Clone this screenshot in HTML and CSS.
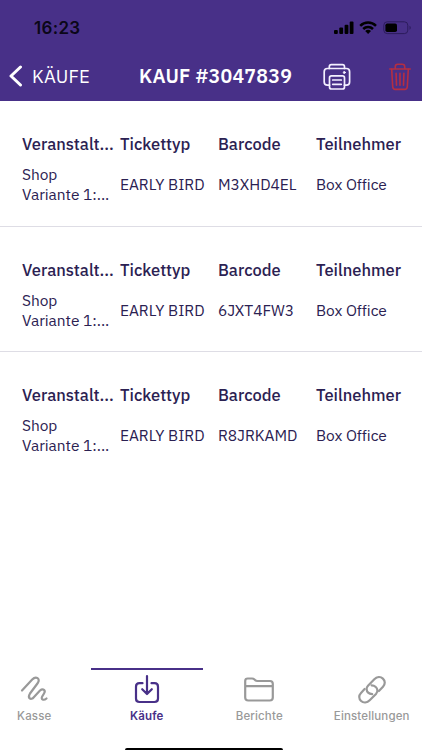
FILE: index.html
```
<!DOCTYPE html>
<html lang="de">

<head>
  <meta charset="UTF-8" />
  <meta name="viewport" content="width=device-width, initial-scale=1" />
  <title>Kauf #3047839</title>
  <link rel="stylesheet" href="styles.css">
</head>

<body>

<header class="header">
  <!-- Statusleiste -->
  <div class="status">
    <span class="time">16:23</span>
    <svg class="status-icons" width="78" height="16" viewBox="0 0 78 16">
      <rect x="0" y="10" width="3.8" height="4" rx="1" />
      <rect x="5.3" y="7.6" width="3.8" height="6.4" rx="1" />
      <rect x="10.6" y="4.8" width="3.8" height="9.2" rx="1" />
      <rect x="15.7" y="1.5" width="3.8" height="12.5" rx="1" />
      <g fill="none" stroke="#000" stroke-width="2.5">
        <path d="M26.2 5.8a11.3 11.3 0 0 1 15.8 0" />
        <path d="M29.2 9a7 7 0 0 1 9.8 0" />
      </g>
      <path d="M31.2 11.1a4.2 4.2 0 0 1 5.8 0l-2.900 2.900z" />
      <rect x="49.8" y="1.8" width="24" height="11.8" rx="3.4" fill="none" stroke="#2c1c5c" />
      <rect x="51.4" y="3.4" width="11.6" height="8.6" rx="1.8" />
      <path d="M75.5 5.7v4c1.7-.7 1.7-3.300 0-4z" fill="#2c1c5c" />
    </svg>
  </div>

  <!-- Navigation -->
  <div class="navbar">
    <a class="back" href="#">
      <svg width="14" height="22" viewBox="0 0 14 22">
        <path d="M11.5 2L2 11l9.500 9" fill="none" stroke="#fff" stroke-width="3" stroke-linecap="round" stroke-linejoin="round" />
      </svg>
      <span>KÄUFE</span>
    </a>
    <h1 class="title">KAUF #3047839</h1>
    <svg class="print" width="28" height="28" viewBox="0 0 28 28" fill="none" stroke="#f4f0ff" stroke-width="1.7" stroke-linecap="round" stroke-linejoin="round">
      <path d="M6.3 5.4V3.8Q6.3 1.7 8.4 1.7h11Q21.5 1.7 21.5 3.8v1.6" />
      <path d="M6.5 22.2H4.4Q1.2 22.2 1.2 19V8.8Q1.2 5.5 4.4 5.5h19Q26.6 5.5 26.6 8.8V19Q26.6 22.2 23.4 22.2h-2" />
      <rect x="6.5" y="12.9" width="15" height="13.1" rx="2" />
      <path d="M9.7 17h8.600M9.7 21.3h8.600" />
      <circle cx="21.3" cy="9.5" r="1" fill="#f4f0ff" stroke-width="1" />
    </svg>
    <svg class="trash" width="22" height="28" viewBox="0 0 22 28" fill="none" stroke="#b52e42" stroke-width="1.6" stroke-linecap="round" stroke-linejoin="round">
      <path d="M.8 6h20.400M6.3 5.8V3.5Q6.3 1.2 8.6 1.2h4.800Q15.7 1.2 15.7 3.5v2.300" />
      <path d="M2.7 6.3l1 17.500Q3.9 26.4 6.3 26.4h9.400Q18.1 26.4 18.3 23.8l1-17.500" />
      <path d="M7.1 10.3l.4 12M11 10.3v12M14.900 10.300l-.4 12" />
    </svg>
  </div>
</header>

<main>
  <section class="ticket">
    <div class="cell head">Veranstalt...</div>
    <div class="cell head">Tickettyp</div>
    <div class="cell head">Barcode</div>
    <div class="cell head">Teilnehmer</div>
    <div class="cell">Shop<br>Variante 1:...</div>
    <div class="cell">EARLY BIRD</div>
    <div class="cell">M3XHD4EL</div>
    <div class="cell">Box Office</div>
  </section>
  <section class="ticket">
    <div class="cell head">Veranstalt...</div>
    <div class="cell head">Tickettyp</div>
    <div class="cell head">Barcode</div>
    <div class="cell head">Teilnehmer</div>
    <div class="cell">Shop<br>Variante 1:...</div>
    <div class="cell">EARLY BIRD</div>
    <div class="cell">6JXT4FW3</div>
    <div class="cell">Box Office</div>
  </section>
  <section class="ticket">
    <div class="cell head">Veranstalt...</div>
    <div class="cell head">Tickettyp</div>
    <div class="cell head">Barcode</div>
    <div class="cell head">Teilnehmer</div>
    <div class="cell">Shop<br>Variante 1:...</div>
    <div class="cell">EARLY BIRD</div>
    <div class="cell">R8JRKAMD</div>
    <div class="cell">Box Office</div>
  </section>
</main>

<!-- Tableiste -->
<nav class="tabs">
  <a class="tab" href="#">
    <svg width="32" height="32" viewBox="0 0 32 32">
      <path d="M4 16.5L14.2 5.5C18 1.5 22.8 4.5 19.8 9L12 19.5C9.2 24 12.8 27 16 23L22 16.5C25.2 13.8 28 16.5 26 19.5L24.2 22.5C22.6 25.3 25.5 27 28.5 24.5" />
    </svg>
    <span>Kasse</span>
  </a>
  <a class="tab active" href="#">
    <svg width="32" height="32" viewBox="0 0 32 32">
      <path d="M11.5 9.2H8.5Q5 9.2 5 12.7V24.5Q5 28 8.5 28h15Q27 28 27 24.5V12.7Q27 9.2 23.5 9.2H20.5M16 2v17.800M11.2 15.2l4.800 4.800 4.800-4.800" />
    </svg>
    <span>Käufe</span>
  </a>
  <a class="tab" href="#">
    <svg width="32" height="32" viewBox="0 0 32 32">
      <path d="M2.2 12.3V7Q2.2 4.5 4.7 4.5H9Q10.5 4.5 11.5 5.5L12 6Q13 7 14.5 7H27Q29.8 7 29.8 9.8V23.5Q29.8 26.5 26.8 26.5H5.2Q2.2 26.5 2.2 23.5V12.3M2.5 12.2h27" />
    </svg>
    <span>Berichte</span>
  </a>
  <a class="tab" href="#">
    <svg width="32" height="32" viewBox="0 0 32 32">
      <path d="M16.2 20.2C13.2 20 10.8 18 10.6 15.2C10.5 13.800 11 12.800 12 11.700L18.300 5.300C20.800 2.800 24.500 2.400 26.900 4.600C29.300 6.800 29.400 10.200 27 12.700L22.900 17" />
      <path d="M15.600 11.400C18.600 11.600 21.200 13.600 21.400 16.400C21.500 17.800 21 18.800 20 19.900L13.700 26.300C11.200 28.800 7.500 29.200 5.100 27C2.700 24.800 2.600 21.400 5 18.900L8.600 15" />
    </svg>
    <span>Einstellungen</span>
  </a>
</nav>
<div class="home-indicator"></div>

</body>
</html>
```
FILE: styles.css
```
* {
  box-sizing: border-box;
}
body {
  display: flex;
  flex-direction: column;
  height: 750px;
  margin: 0;
  overflow: hidden;
  background-color: #fff;
  color: #2b2152;
  font-family: "IBM Plex Sans", Roboto, sans-serif;
}
a {
  color: inherit;
  text-decoration: none;
}
svg {
  display: block;
  flex: none;
}
.header {
  height: 101px;
  background-color: #483088;
}
.status {
  display: flex;
  align-items: center;
  justify-content: space-between;
  height: 52px;
  padding: 4px 10px 0 34px;
}
.time {
  color: #0b0718;
  font-family: Inter, sans-serif;
  font-size: 17px;
  font-weight: 600;
  letter-spacing: 0.3px;
}
.navbar {
  display: flex;
  align-items: center;
  height: 49px;
  padding-left: 9px;
  color: #fff;
}
.back {
  display: flex;
  align-items: center;
  gap: 9px;
  width: 130px;
  padding-bottom: 1px;
  font-size: 18.5px;
  letter-spacing: 0.2px;
}
.title {
  width: 184px;
  margin: 0;
  padding-bottom: 2px;
  font-size: 19.5px;
  font-weight: 600;
  letter-spacing: 0.25px;
  white-space: nowrap;
}
.trash {
  margin-left: 38px;
}

/* Tickets */
.ticket {
  display: grid;
  grid-template-columns: repeat(4, 98px);
  grid-template-rows: 24px 40px;
  row-gap: 8px;
  align-content: start;
  align-items: center;
  height: 125.5px;
  padding: 31px 0 0 22px;
  border-bottom: 1px solid #dedde5;
}
.ticket:last-child {
  border-bottom: none;
}
.cell {
  font-size: 15.5px;
  line-height: 20px;
  letter-spacing: -0.05px;
  white-space: nowrap;
}
.head {
  font-size: 16.5px;
  font-weight: 500;
  letter-spacing: 0;
}

/* Tableiste */
.tabs {
  display: flex;
  width: 450px;
  height: 80px;
  margin: auto 0 0 -22px;
}
.tab {
  display: flex;
  flex: 1;
  flex-direction: column;
  align-items: center;
  gap: 3px;
  border-top: 2px solid transparent;
  padding-top: 4px;
  color: #999;
  font-family: Inter, sans-serif;
  font-size: 11.5px;
  font-weight: 500;
  line-height: 15px;
  letter-spacing: 0.15px;
}
.tab svg {
  fill: none;
  stroke: currentColor;
  stroke-width: 2.2;
  stroke-linecap: round;
  stroke-linejoin: round;
}
.active {
  border-color: #483088;
  color: #483088;
  font-weight: 600;
}
.home-indicator {
  width: 158px;
  height: 2px;
  margin-left: 125px;
  border-radius: 2px 2px 0 0;
  background-color: #000;
}
```
